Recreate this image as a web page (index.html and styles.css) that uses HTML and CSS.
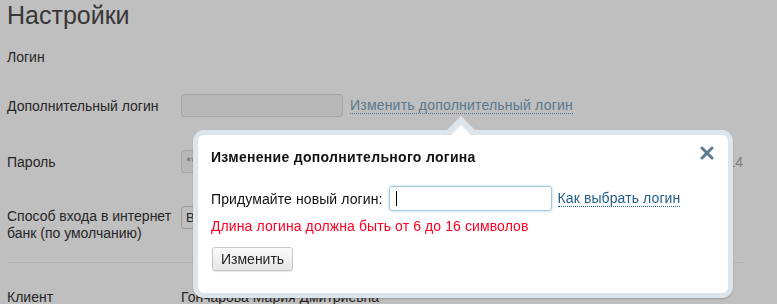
FILE: index.html
```html
<!DOCTYPE html>
<html lang="ru">
    <head>
        <meta charset="UTF-8" />
        <title>Настройки</title>
        <link rel="stylesheet" href="styles.css">
    </head>
    <body>
        <div class="page">
            <h1 class="title">Настройки</h1>
            <div class="section-title">Логин</div>

            <div class="form">
                <div class="row">
                    <div class="label">Дополнительный логин</div>
                    <div class="value">
                        <input class="field" type="text" disabled>
                        <a class="dotted-link" href="#">Изменить дополнительный логин</a>
                    </div>
                </div>
                <div class="row">
                    <div class="label">Пароль</div>
                    <div class="value">
                        <input class="field field-pass" type="text" value="********" disabled>
                        <span class="note">Дата последнего изменения: 12.03.2014</span>
                    </div>
                </div>
                <div class="row row-top">
                    <div class="label label-wrap">Способ входа в интернет банк (по умолчанию)</div>
                    <div class="value">
                        <div class="field select">Вход по логину и паролю</div>
                    </div>
                </div>
            </div>

            <hr class="divider">

            <div class="row">
                <div class="label">Клиент</div>
                <div class="value">Гончарова Мария Дмитриевна</div>
            </div>
        </div>

        <div class="overlay"></div>

        <div class="popup">
            <div class="popup-inner">
                <div class="popup-head">
                    <span class="popup-title">Изменение дополнительного логина</span>
                    <svg class="close" width="14" height="14" viewBox="0 0 14 14">
                        <path d="M2 2 L12 12 M12 2 L2 12" stroke="#5d7b8e" stroke-width="3" stroke-linecap="round" />
                    </svg>
                </div>
                <div class="popup-row">
                    <span>Придумайте новый логин:</span>
                    <span class="login-input"><span class="caret"></span></span>
                    <a class="help-link" href="#">Как выбрать логин</a>
                </div>
                <div class="error">Длина логина должна быть от 6 до 16 символов</div>
                <button class="btn">Изменить</button>
            </div>
        </div>
    </body>
</html>
```

FILE: styles.css
```css
body {
    margin: 0;
    background: #fff;
    font-family: "Liberation Sans", Arial, sans-serif;
    font-size: 14px;
    color: #333;
    overflow: hidden;
}

.page {
    width: 736px;
    padding: 0 7px;
}

.title {
    margin: 0;
    font-size: 25px;
    line-height: 30px;
    font-weight: normal;
    color: #4a4a4a;
}

.section-title {
    margin-top: 17px;
    line-height: 20px;
}

.form {
    margin-top: 27px;
    display: flex;
    flex-direction: column;
    gap: 33px;
}

.row {
    display: grid;
    grid-template-columns: 174px 1fr;
    align-items: center;
}

.row-top {
    align-items: start;
}

.label-wrap {
    padding-top: 2px;
    line-height: 17px;
    width: 172px;
}

.value {
    display: flex;
    align-items: center;
    gap: 7px;
}

.field {
    box-sizing: border-box;
    width: 162px;
    height: 23px;
    border: 1px solid #ddd;
    border-radius: 3px;
    background: #f6f6f6;
    font: inherit;
    font-size: 13px;
    padding: 0 4px;
    color: #333;
}

.field-pass {
    color: #999;
}

.select {
    display: flex;
    align-items: center;
    width: 230px;
    background: #fff;
    border-color: #ccc;
}

.dotted-link {
    color: #7aa1bd;
    text-decoration: none;
    border-bottom: 1px dotted #7aa1bd;
    line-height: 16px;
    letter-spacing: 0.2px;
}

.note {
    margin-left: auto;
    color: #aaa;
}

.divider {
    margin: 20px 0 26px;
    border: 0;
    border-top: 1px solid #eee;
}

.overlay {
    position: fixed;
    inset: 0;
    background: rgba(0, 0, 0, 0.25);
}

.popup {
    position: absolute;
    left: 193px;
    top: 130px;
    width: 540px;
    height: 168px;
    box-sizing: border-box;
    border: 5px solid #dde5ec;
    border-radius: 11px;
    background: #fff;
    box-shadow: 0 1px 2px rgba(0, 0, 0, 0.2);
}

.popup::before {
    content: "";
    position: absolute;
    left: 249px;
    top: -19px;
    border: 14px solid transparent;
    border-bottom-color: #dde5ec;
    border-top: 0;
}

.popup::after {
    content: "";
    position: absolute;
    left: 253px;
    top: -10px;
    border: 10px solid transparent;
    border-bottom-color: #fff;
    border-top: 0;
}

.popup-inner {
    padding: 12px 13px 0;
    color: #111;
    letter-spacing: 0.1px;
}

.popup-head {
    display: flex;
    justify-content: space-between;
    align-items: center;
    height: 20px;
}

.popup-title {
    font-weight: bold;
    font-size: 14px;
    letter-spacing: 0.3px;
}

.close {
    margin-top: -9px;
    margin-right: 1px;
}

.popup-row {
    margin-top: 19px;
    display: flex;
    align-items: center;
    gap: 6px;
}

.login-input {
    box-sizing: border-box;
    display: flex;
    align-items: center;
    width: 163px;
    height: 25px;
    border: 1px solid #a9c7da;
    border-radius: 3px;
    box-shadow: 0 0 3px #a8d4ee;
    padding-left: 6px;
}

.caret {
    width: 1px;
    height: 15px;
    background: #000;
}

.help-link {
    color: #1f5d8c;
    text-decoration: none;
    border-bottom: 1px dotted #1f5d8c;
    line-height: 16px;
}

.error {
    margin-top: 7px;
    color: #ff0022;
    line-height: 16px;
}

.btn {
    margin-top: 13px;
    margin-left: 1px;
    height: 24px;
    padding: 0 8px;
    font: inherit;
    font-size: 14px;
    color: #222;
    background: linear-gradient(#fbfbfb, #e6e6e6);
    border: 1px solid #c6c6c6;
    border-radius: 3px;
    box-shadow: 0 1px 1px rgba(0, 0, 0, 0.1);
}
```
